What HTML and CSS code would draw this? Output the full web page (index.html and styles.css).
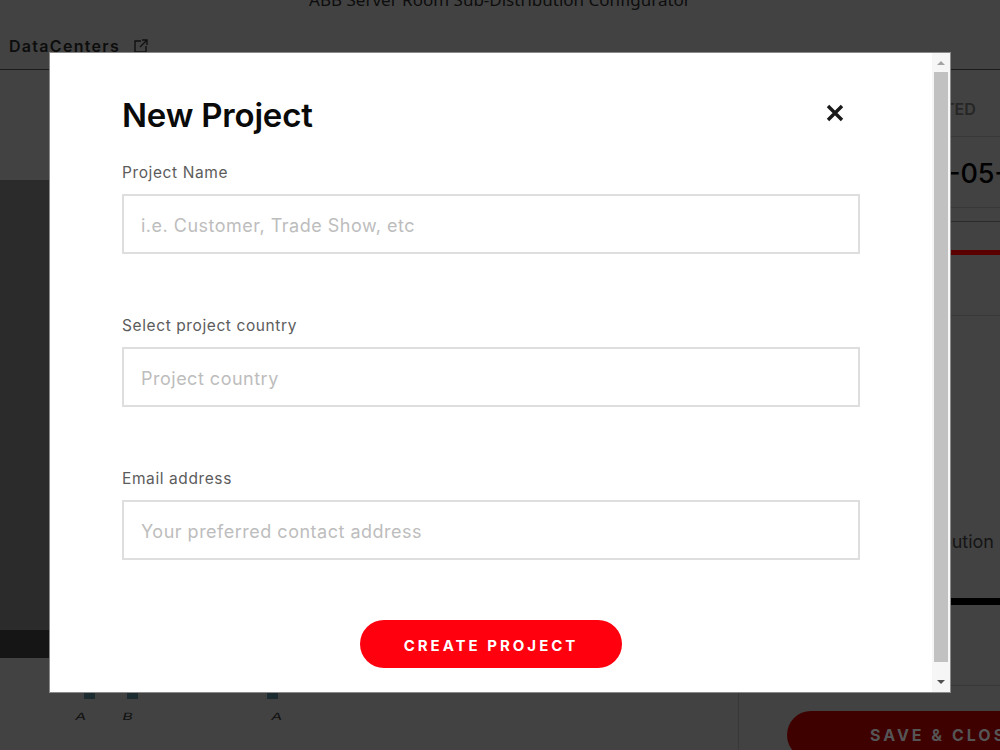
FILE: index.html
```html
<!DOCTYPE html>
<html>

<head>
  <meta charset="UTF-8">
  <title>New Project</title>
  <link rel="stylesheet" href="styles.css">
</head>

<body>

  <div class="page">
    <div class="top-title">ABB Server Room Sub-Distribution Configurator</div>
    <div class="top-nav">
      <span class="nav-name">DataCenters</span>
      <svg class="nav-icon" width="16" height="16" viewBox="0 0 16 16">
        <path d="M8 3H2v11h11V8" fill="none" stroke="#111" stroke-width="1.4" />
        <path d="M7 9l7-7M9 2h5v5" fill="none" stroke="#111" stroke-width="1.4" />
      </svg>
    </div>

    <div class="columns">
      <div class="left-col">
        <div class="left-head"></div>
        <div class="left-dark"></div>
        <div class="left-bar"></div>
        <div class="left-foot">
          <div class="marks">
            <i class="mark"></i>
            <i class="mark"></i>
            <i class="mark mark-last"></i>
          </div>
          <div class="phases">
            <span class="phase">A</span>
            <span class="phase phase-b">B</span>
            <span class="phase phase-c">A</span>
          </div>
        </div>
      </div>

      <div class="right-col">
        <div class="status">TED</div>
        <div class="date">2021-05-10</div>
        <div class="stripe"></div>
        <div class="progress"></div>
        <div class="block"></div>
        <div class="desc">Sub-Distribution (</div>
        <div class="foot"></div>
        <div class="save-btn">SAVE &amp; CLOSE</div>
      </div>
    </div>
  </div>

  <div class="overlay-modal">
    <div class="modal-body">
      <div class="modal-head">
        <h1>New Project</h1>
        <svg class="close-icon" width="20" height="20" viewBox="0 0 20 20">
          <path d="M3 3l14 14M17 3L3 17" fill="none" stroke="#1a1a1a" stroke-width="3.4" />
        </svg>
      </div>

      <div class="field">
        <label for="name">Project Name</label>
        <input type="text" id="name" placeholder="i.e. Customer, Trade Show, etc">
      </div>
      <div class="field">
        <label for="country">Select project country</label>
        <input type="text" id="country" placeholder="Project country">
      </div>
      <div class="field">
        <label for="email">Email address</label>
        <input type="text" id="email" placeholder="Your preferred contact address">
      </div>

      <div class="actions">
        <button type="button" class="create-btn">CREATE PROJECT</button>
      </div>
    </div>

    <div class="scrollbar">
      <div class="arrow-box"><span class="arrow-up"></span></div>
      <div class="thumb"></div>
      <div class="arrow-box arrow-box-low"><span class="arrow-down"></span></div>
    </div>
  </div>

</body>

</html>
```

FILE: styles.css
```css
html,
body {
  margin: 0;
  height: 100%;
  overflow: hidden;
}

body {
  font-family: Inter, "Noto Sans", sans-serif;
  background: #424242;
}

/* page behind the modal */
.page {
  height: 750px;
  overflow: hidden;
  color: #0d0d0d;
}

.top-title {
  height: 10px;
  line-height: 0;
  text-align: center;
  font-family: "Noto Sans", sans-serif;
  font-size: 17px;
}

.top-nav {
  height: 60px;
  box-sizing: border-box;
  padding: 26px 0 0 9px;
  display: flex;
  align-items: flex-start;
  gap: 13px;
  border-bottom: 1px solid #1c1c1c;
}

.nav-name {
  font-size: 16px;
  line-height: 20px;
  font-weight: 600;
  letter-spacing: 1.3px;
}

.nav-icon {
  margin-top: 2px;
}

.columns {
  display: flex;
}

.left-col {
  width: 738px;
  border-right: 1px solid #383838;
}

.left-head {
  height: 110px;
}

.left-dark {
  height: 450px;
  background: #2b2b2b;
}

.left-bar {
  height: 28px;
  background: #151515;
}

.left-foot {
  height: 92px;
}

.marks {
  display: flex;
  gap: 32px;
  padding: 34px 0 0 84px;
}

.mark {
  width: 11px;
  height: 7px;
  background: #1c2c30;
}

.mark-last {
  margin-left: 97px;
}

.phases {
  display: flex;
  padding: 11px 0 0 75px;
  font-size: 10px;
  line-height: 12px;
  color: #111;
}

.phase {
  display: block;
  width: 12px;
  text-align: center;
  transform: scaleX(1.6) skewX(-8deg);
}

.phase-b {
  margin-left: 35px;
}

.phase-c {
  margin-left: 137px;
}

.right-col {
  flex: 1;
  overflow: hidden;
  white-space: nowrap;
}

.status {
  height: 67px;
  box-sizing: border-box;
  padding: 29px 0 0 205px;
  font-size: 16px;
  line-height: 20px;
  font-weight: 600;
  color: #262626;
  border-bottom: 1px solid #383838;
}

.date {
  height: 71px;
  box-sizing: border-box;
  padding-top: 17px;
  margin-left: 147px;
  font-size: 27px;
  font-weight: 500;
  line-height: 40px;
  color: #000;
  border-bottom: 1px solid #383838;
}

.stripe {
  height: 13px;
  border-bottom: 1px solid #2b2b2b;
}

.progress {
  height: 33px;
  box-sizing: border-box;
  border-bottom: 5px solid #5a0000;
}

.block {
  height: 60px;
  border-bottom: 1px solid #383838;
}

.desc {
  height: 289px;
  box-sizing: border-box;
  padding-top: 214px;
  margin-left: 116px;
  font-size: 18px;
  line-height: 24px;
  color: #151515;
  border-bottom: 7px solid #000;
}

.foot {
  height: 80px;
  border-bottom: 1px solid #383838;
}

.save-btn {
  margin: 25px 0 0 48px;
  width: 300px;
  height: 48px;
  box-sizing: border-box;
  padding-left: 83px;
  border-radius: 24px;
  background: #3f0000;
  color: #555;
  font-size: 16px;
  font-weight: 700;
  line-height: 48px;
  letter-spacing: 3px;
}

/* modal */
.overlay-modal {
  position: fixed;
  left: 50px;
  top: 53px;
  width: 900px;
  height: 639px;
  display: flex;
  background: #fff;
  outline: 1px solid #8a8a8a;
}

.modal-body {
  flex: 1;
  box-sizing: border-box;
  padding: 0 72px;
}

.modal-head {
  height: 100px;
  display: flex;
  justify-content: space-between;
  align-items: flex-start;
}

.modal-head h1 {
  margin: 41px 0 0;
  font-size: 33px;
  line-height: 42px;
  font-weight: 600;
  letter-spacing: -0.2px;
  color: #0a0a0a;
}

.close-icon {
  margin: 50px 15px 0 0;
}

.field {
  height: 153px;
}

.field label {
  display: block;
  height: 41px;
  padding-top: 10px;
  box-sizing: border-box;
  font-size: 15.5px;
  line-height: 20px;
  letter-spacing: 0.6px;
  color: #5c5c5c;
}

.field input {
  display: block;
  width: 100%;
  height: 60px;
  box-sizing: border-box;
  padding: 2px 17px 0;
  border: 2px solid #dedede;
  font-family: inherit;
  font-size: 18px;
  letter-spacing: 0.5px;
  color: #333;
  outline: none;
}

.field input::placeholder {
  color: #bdbdbd;
  opacity: 1;
}

.actions {
  margin-top: 8px;
  display: flex;
  justify-content: center;
}

.create-btn {
  width: 262px;
  height: 48px;
  padding: 2px 0 0;
  border: 0;
  border-radius: 24px;
  background: #ff000f;
  color: #fff;
  font-family: inherit;
  font-size: 15px;
  font-weight: 700;
  letter-spacing: 3px;
}

/* drawn scrollbar */
.scrollbar {
  width: 18px;
  display: flex;
  flex-direction: column;
  background: #f6f6f6;
}

.arrow-box {
  height: 19px;
  display: flex;
  align-items: center;
  justify-content: center;
}

.arrow-box-low {
  height: 30px;
  padding-top: 9px;
  box-sizing: border-box;
}

.thumb {
  flex: 1;
  margin: 0 2px;
  background: #c1c1c1;
}

.arrow-up {
  border: 4px solid transparent;
  border-top: 0;
  border-bottom: 4px solid #a3a3a3;
}

.arrow-down {
  border: 4px solid transparent;
  border-bottom: 0;
  border-top: 4px solid #505050;
}
```
